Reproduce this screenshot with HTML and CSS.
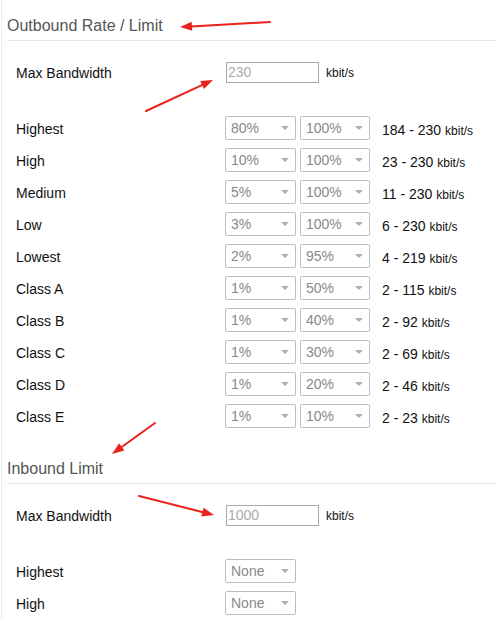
FILE: index.html
```html
<!DOCTYPE html>
<html>
<head>
<meta charset="utf-8">
<link rel="stylesheet" href="styles.css">
</head>
<body>
<div class="page">
  <div class="section">
    <h2 class="heading">Outbound Rate / Limit</h2>
    <div class="row bw">
      <span class="label">Max Bandwidth</span>
      <input class="num" type="text" placeholder="230" disabled>
      <span class="unit">kbit/s</span>
    </div>
    <div class="rows">
      <div class="row"><span class="label">Highest</span><div class="sel a">80%</div><div class="sel b">100%</div><span class="range">184 - 230 <small>kbit/s</small></span></div>
      <div class="row"><span class="label">High</span><div class="sel a">10%</div><div class="sel b">100%</div><span class="range">23 - 230 <small>kbit/s</small></span></div>
      <div class="row"><span class="label">Medium</span><div class="sel a">5%</div><div class="sel b">100%</div><span class="range">11 - 230 <small>kbit/s</small></span></div>
      <div class="row"><span class="label">Low</span><div class="sel a">3%</div><div class="sel b">100%</div><span class="range">6 - 230 <small>kbit/s</small></span></div>
      <div class="row"><span class="label">Lowest</span><div class="sel a">2%</div><div class="sel b">95%</div><span class="range">4 - 219 <small>kbit/s</small></span></div>
      <div class="row"><span class="label">Class A</span><div class="sel a">1%</div><div class="sel b">50%</div><span class="range">2 - 115 <small>kbit/s</small></span></div>
      <div class="row"><span class="label">Class B</span><div class="sel a">1%</div><div class="sel b">40%</div><span class="range">2 - 92 <small>kbit/s</small></span></div>
      <div class="row"><span class="label">Class C</span><div class="sel a">1%</div><div class="sel b">30%</div><span class="range">2 - 69 <small>kbit/s</small></span></div>
      <div class="row"><span class="label">Class D</span><div class="sel a">1%</div><div class="sel b">20%</div><span class="range">2 - 46 <small>kbit/s</small></span></div>
      <div class="row"><span class="label">Class E</span><div class="sel a">1%</div><div class="sel b">10%</div><span class="range">2 - 23 <small>kbit/s</small></span></div>
    </div>
  </div>
  <div class="section second">
    <h2 class="heading">Inbound Limit</h2>
    <div class="row bw">
      <span class="label">Max Bandwidth</span>
      <input class="num" type="text" placeholder="1000" disabled>
      <span class="unit">kbit/s</span>
    </div>
    <div class="rows">
      <div class="row"><span class="label">Highest</span><div class="sel a">None</div></div>
      <div class="row"><span class="label">High</span><div class="sel a">None</div></div>
    </div>
  </div>
  <svg class="marks" width="496" height="619" viewBox="0 0 496 619">
    <g stroke="#e8231d" stroke-width="2" fill="none" stroke-linecap="round">
      <line x1="270" y1="22" x2="191" y2="26.4"/>
      <line x1="146" y1="111" x2="203" y2="84.6"/>
      <line x1="155" y1="423" x2="121" y2="447.5"/>
      <line x1="139" y1="496" x2="203" y2="512.2"/>
    </g>
    <g fill="#e8231d">
      <polygon points="180,27 192.2,30.8 191.7,21.8"/>
      <polygon points="213,80 204,89.1 200.2,80.9"/>
      <polygon points="112,454 124.4,450.6 119.1,443.3"/>
      <polygon points="214,515 201.3,516.4 203.5,507.7"/>
    </g>
  </svg>
</div>
</body>
</html>
```
FILE: styles.css
```css
html, body {
  margin: 0;
  padding: 0;
  background: #fff;
  overflow: hidden;
}
body {
  font-family: "Liberation Sans", Arial, sans-serif;
  color: #111;
}
.page {
  position: relative;
  width: 495px;
  height: 619px;
  margin-left: 1px;
  border-left: 1px solid #ececec;
  box-sizing: border-box;
  padding-left: 5px;
}
.section.second {
  margin-top: 11px;
}
.heading {
  margin: 0;
  padding: 16px 0 4px 0;
  font-size: 16px;
  line-height: 20px;
  font-weight: normal;
  color: #555;
  border-bottom: 1px solid #e8e8e8;
}
.row {
  display: flex;
  align-items: center;
  height: 32px;
  padding-left: 9px;
  font-size: 14px;
}
.row.bw {
  margin-top: 15px;
}
.rows {
  margin-top: 24px;
}
.label {
  width: 209px;
  flex: none;
  padding-top: 2px;
}
.num {
  width: 93px;
  height: 21px;
  box-sizing: border-box;
  margin: 0 0 0 1px;
  padding: 0 1px;
  border: 1px solid #a9a9a9;
  border-radius: 0;
  background: #fff;
  font-family: "Liberation Sans", Arial, sans-serif;
  font-size: 14px;
}
.num::placeholder {
  color: #aaa;
  opacity: 1;
}
.unit {
  margin-left: 7px;
  padding-top: 2px;
  font-size: 12px;
  color: #111;
}
.sel {
  position: relative;
  height: 24px;
  box-sizing: border-box;
  border: 1px solid #bdbdbd;
  border-radius: 2px;
  padding-left: 5px;
  line-height: 22px;
  font-size: 14px;
  color: #888;
  background: #fff;
}
.sel.a { width: 71px; }
.sel.b { width: 70px; margin-left: 4px; }
.sel::after {
  content: "";
  position: absolute;
  right: 6px;
  top: 9px;
  width: 0;
  height: 0;
  border-left: 4px solid transparent;
  border-right: 4px solid transparent;
  border-top: 4px solid #b0b0b0;
}
.range {
  margin-left: 12px;
  padding-top: 3px;
  font-size: 14px;
  color: #111;
}
.range small {
  font-size: 12px;
}
.marks {
  position: absolute;
  left: -2px;
  top: 0;
  pointer-events: none;
}
```
